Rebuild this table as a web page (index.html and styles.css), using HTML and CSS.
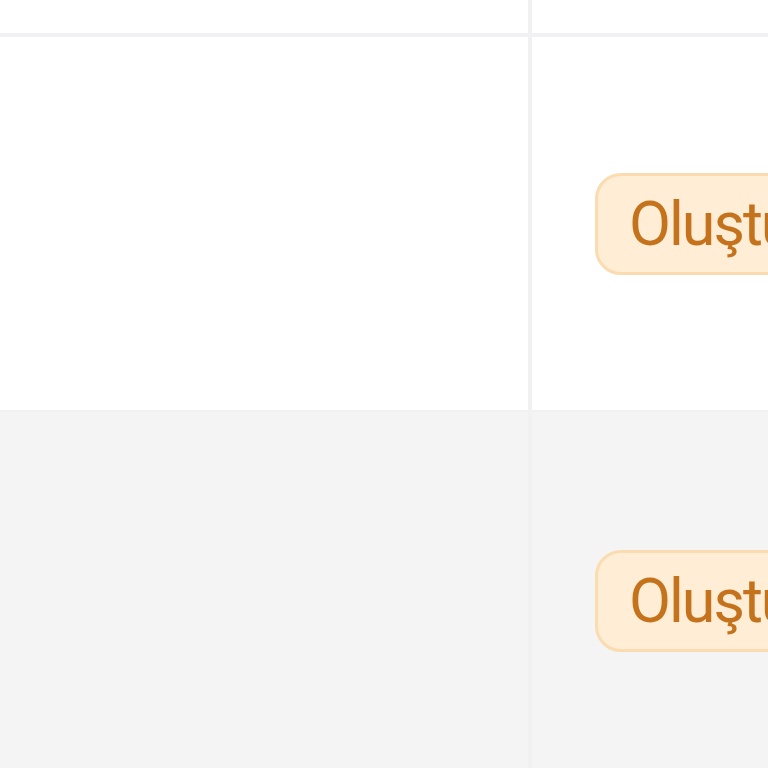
FILE: index.html
```html
<!DOCTYPE html>
<html>
<head>
<meta charset="utf-8">
<link rel="stylesheet" href="styles.css">
</head>
<body>
<div class="table">
  <div class="row head">
    <div class="cell first"></div>
    <div class="cell second"></div>
  </div>
  <div class="row">
    <div class="cell first"></div>
    <div class="cell second"><span class="badge">Oluşturuluyor</span></div>
  </div>
  <div class="row alt">
    <div class="cell first"></div>
    <div class="cell second"><span class="badge">Oluşturuluyor</span></div>
  </div>
</div>
</body>
</html>
```
FILE: styles.css
```css
html, body {
  margin: 0;
  padding: 0;
  background: #ffffff;
  overflow: hidden;
}
.table {
  width: 1100px;
  font-family: Roboto, "Noto Sans", sans-serif;
}
.row {
  display: grid;
  grid-template-columns: 532px 1fr;
  border-bottom: 4px solid #f1f1f3;
}
.row.head {
  height: 33px;
}
.row:not(.head) {
  height: 373px;
  border-bottom-width: 2px;
}
.row.alt {
  height: 378px;
  background: #f4f4f5;
}
.cell.first {
  border-right: 4px solid #f1f1f3;
}
.cell.second {
  display: flex;
  align-items: center;
  padding-left: 63px;
}
.badge {
  display: inline-flex;
  align-items: center;
  height: 102px;
  box-sizing: border-box;
  padding: 0 31px;
  border: 3px solid #fbdcb0;
  border-radius: 26px;
  background: #ffedd5;
  color: #c4731c;
  font-size: 61px;
  font-weight: 400;
  letter-spacing: -2px;
  white-space: nowrap;
}
```
